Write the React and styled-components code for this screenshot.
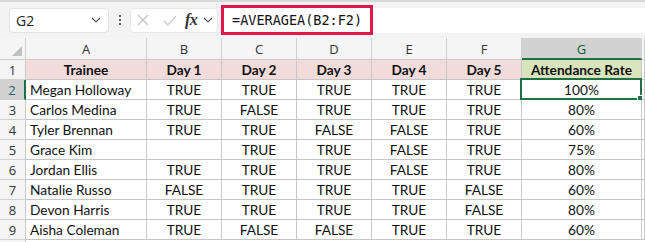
import React from "react";
import styled, { createGlobalStyle, css } from "styled-components";

const Global = createGlobalStyle`
  html, body { margin: 0; padding: 0; background: #ffffff; }
  body { font-family: Lato, "Noto Sans", sans-serif; overflow: hidden; }
`;

const Page = styled.div`
  width: 645px;
  height: 242px;
  overflow: hidden;
  background: #ffffff;
`;

const Toolbar = styled.div`
  height: 38px;
  box-sizing: border-box;
  border-top: 2px solid #d9d9d9;
  background: #f3f3f3;
  display: flex;
  align-items: center;
  padding-left: 9px;
`;

const NameBox = styled.div`
  width: 100px;
  height: 25px;
  box-sizing: border-box;
  background: #ffffff;
  border: 1px solid #e3e3e3;
  border-radius: 4px;
  display: flex;
  align-items: center;
  justify-content: space-between;
  padding: 0 7px 0 6px;
  font-family: "Segoe UI", "Open Sans", sans-serif;
  font-size: 14px;
  color: #222;
`;

const Dots = styled.div`
  width: 21px;
  display: flex;
  flex-direction: column;
  align-items: center;
  gap: 2px;
  span {
    width: 2px;
    height: 2px;
    background: #333;
    border-radius: 1px;
  }
`;

const FxBox = styled.div`
  width: 88px;
  height: 25px;
  box-sizing: border-box;
  background: #ffffff;
  border: 1px solid #e8e8e8;
  border-radius: 4px;
  display: flex;
  align-items: center;
  padding-left: 6px;
  gap: 6px;
`;

const Spacer = styled.span`
  width: ${(p) => p.$w}px;
`;

const Fx = styled.span`
  font-family: "Liberation Serif", "DejaVu Serif", serif;
  font-style: italic;
  font-weight: bold;
  font-size: 16px;
  color: #333;
  margin-left: 2px;
  letter-spacing: -0.5px;
`;

const FormulaWrap = styled.div`
  flex: 1;
  height: 25px;
  margin-left: 4px;
  background: #ffffff;
  display: flex;
  align-items: center;
`;

const FormulaText = styled.div`
  height: 30px;
  box-sizing: border-box;
  border: 3px solid #e3164a;
  display: flex;
  align-items: center;
  padding: 0 8px 0 8px;
  margin-left: -1px;
  font-family: "DejaVu Sans Mono", "Liberation Mono", monospace;
  font-size: 13.5px;
  color: #111;
`;

const Grid = styled.div`
  display: grid;
  grid-template-columns: 26px 121px 75px 75px 75px 75px 75px 120px 1fr;
  grid-auto-rows: 20px;
  grid-template-rows: 22px;
`;

const ColHead = styled.div`
  background: ${(p) => (p.$active ? "#d2d2d2" : "#f5f5f5")};
  border-right: 1px solid #d0d0d0;
  border-bottom: ${(p) => (p.$active ? "2px solid #1e7145" : "1px solid #c8c8c8")};
  box-sizing: border-box;
  display: flex;
  align-items: center;
  justify-content: center;
  font-family: "Segoe UI", "Open Sans", sans-serif;
  font-size: 13px;
  color: ${(p) => (p.$active ? "#0e5c2f" : "#333")};
  padding-top: 1px;
`;

const Corner = styled.div`
  background: #f5f5f5;
  border-right: 1px solid #d0d0d0;
  border-bottom: 1px solid #c8c8c8;
  box-sizing: border-box;
  display: flex;
  align-items: flex-end;
  justify-content: flex-end;
  padding: 0 3px 3px 0;
`;

const RowHead = styled.div`
  background: ${(p) => (p.$active ? "#d2d2d2" : "#f5f5f5")};
  border-right: ${(p) => (p.$active ? "2px solid #1e7145" : "1px solid #c8c8c8")};
  border-bottom: 1px solid #d0d0d0;
  box-sizing: border-box;
  display: flex;
  align-items: center;
  justify-content: center;
  font-family: "Segoe UI", "Open Sans", sans-serif;
  font-size: 13px;
  color: ${(p) => (p.$active ? "#2e5e6e" : "#333")};
`;

const Cell = styled.div`
  position: relative;
  box-sizing: border-box;
  border-right: 1px solid #c6c6c6;
  border-bottom: 1px solid #c6c6c6;
  display: flex;
  align-items: center;
  justify-content: ${(p) => (p.$left ? "flex-start" : "center")};
  padding: ${(p) => (p.$left ? "0 0 0 4px" : "0")};
  font-family: Lato, "Noto Sans", sans-serif;
  font-size: 13.7px;
  color: #111;
  white-space: nowrap;
  background: ${(p) => p.$bg || "#ffffff"};
  ${(p) =>
    p.$bold &&
    css`
      font-weight: bold;
    `}
`;

const Selection = styled.div`
  position: absolute;
  left: -2px;
  top: -2px;
  right: -1px;
  bottom: -1px;
  border: 2px solid #1e7145;
  pointer-events: none;
  &::after {
    content: "";
    position: absolute;
    right: -4px;
    bottom: -4px;
    width: 5px;
    height: 5px;
    background: #1e7145;
    border: 1px solid #ffffff;
  }
`;

const Chevron = () => (
  <svg width="10" height="6" viewBox="0 0 10 6">
    <path d="M1 1 L5 5 L9 1" fill="none" stroke="#555" strokeWidth="1.2" />
  </svg>
);

const XIcon = () => (
  <svg width="12" height="12" viewBox="0 0 12 12">
    <path d="M1 1 L11 11 M11 1 L1 11" stroke="#c4c4c4" strokeWidth="1.2" fill="none" />
  </svg>
);

const CheckIcon = () => (
  <svg width="14" height="11" viewBox="0 0 14 11">
    <path d="M1 6 L5 10 L13 1" stroke="#c4c4c4" strokeWidth="1.2" fill="none" />
  </svg>
);

const CornerTri = () => (
  <svg width="10" height="10" viewBox="0 0 10 10">
    <path d="M10 0 L10 10 L0 10 Z" fill="#c2c2c2" />
  </svg>
);

const cols = ["A", "B", "C", "D", "E", "F", "G", ""];
const header = ["Trainee", "Day 1", "Day 2", "Day 3", "Day 4", "Day 5", "Attendance Rate"];
const rows = [
  ["Megan Holloway", "TRUE", "TRUE", "TRUE", "TRUE", "TRUE", "100%"],
  ["Carlos Medina", "TRUE", "FALSE", "TRUE", "TRUE", "TRUE", "80%"],
  ["Tyler Brennan", "TRUE", "TRUE", "FALSE", "FALSE", "TRUE", "60%"],
  ["Grace Kim", "", "TRUE", "TRUE", "FALSE", "TRUE", "75%"],
  ["Jordan Ellis", "TRUE", "TRUE", "TRUE", "FALSE", "TRUE", "80%"],
  ["Natalie Russo", "FALSE", "TRUE", "TRUE", "TRUE", "FALSE", "60%"],
  ["Devon Harris", "TRUE", "TRUE", "TRUE", "TRUE", "FALSE", "80%"],
  ["Aisha Coleman", "TRUE", "FALSE", "FALSE", "TRUE", "TRUE", "60%"],
];

export default function App() {
  return (
    <Page>
      <Global />
      <Toolbar>
        <NameBox>
          <span>G2</span>
          <Chevron />
        </NameBox>
        <Dots>
          <span />
          <span />
          <span />
        </Dots>
        <FxBox>
          <XIcon />
          <Spacer $w={2} />
          <CheckIcon />
          <Fx>fx</Fx>
          <Chevron />
        </FxBox>
        <FormulaWrap>
          <FormulaText>=AVERAGEA(B2:F2)</FormulaText>
        </FormulaWrap>
      </Toolbar>
      <Grid>
        <Corner>
          <CornerTri />
        </Corner>
        {cols.map((c) => (
          <ColHead key={c || "x"} $active={c === "G"}>
            {c}
          </ColHead>
        ))}
        <RowHead>1</RowHead>
        {header.map((h, i) => (
          <Cell key={h} $bold $bg={i === 6 ? "#d8e4bc" : "#f2dcdb"}>
            {h}
          </Cell>
        ))}
        <Cell />
        {rows.map((r, ri) => (
          <React.Fragment key={ri}>
            <RowHead $active={ri === 0}>{ri + 2}</RowHead>
            {r.map((v, ci) => (
              <Cell key={ci} $left={ci === 0}>
                {v}
                {ri === 0 && ci === 6 && <Selection />}
              </Cell>
            ))}
            <Cell />
          </React.Fragment>
        ))}
        <RowHead />
      </Grid>
    </Page>
  );
}
